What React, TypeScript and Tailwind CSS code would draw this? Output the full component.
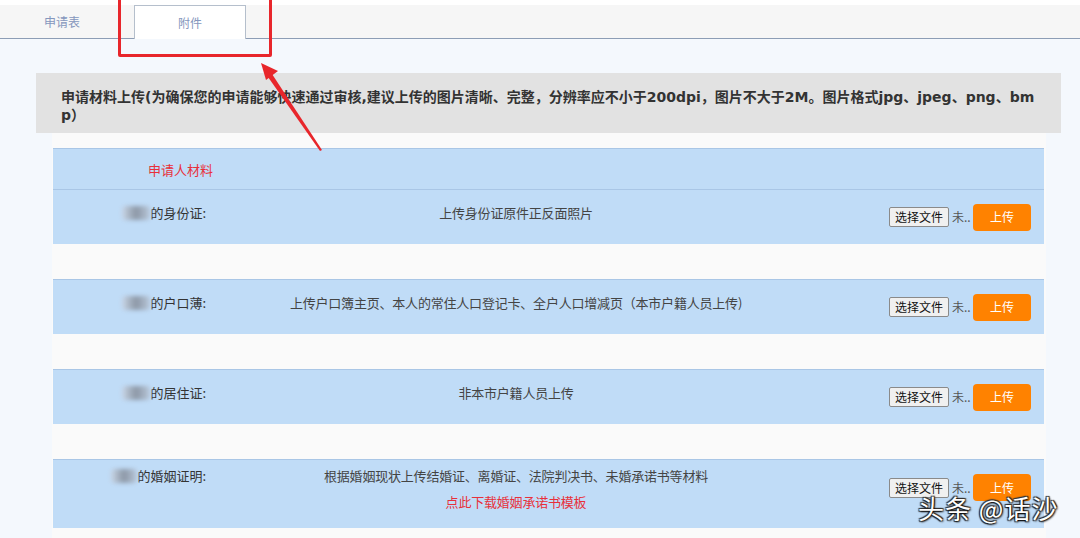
import React from 'react';

const font = { fontFamily: '"Noto Sans CJK SC", "Noto Sans", sans-serif' };
const headFont = { fontFamily: '"DejaVu Sans", "Noto Sans CJK SC", sans-serif' };

type Item = {
  label: string;
  blur: number;
  desc: string;
  link?: string;
};

const items: Item[] = [
  { label: '的身份证:', blur: 28, desc: '上传身份证原件正反面照片' },
  { label: '的户口薄:', blur: 28, desc: '上传户口簿主页、本人的常住人口登记卡、全户人口增减页（本市户籍人员上传)' },
  { label: '的居住证:', blur: 28, desc: '非本市户籍人员上传' },
  { label: '的婚姻证明:', blur: 26, desc: '根据婚姻现状上传结婚证、离婚证、法院判决书、未婚承诺书等材料', link: '点此下载婚姻承诺书模板' },
];

const Blur: React.FC<{ w: number }> = ({ w }) => (
  <span className="inline-block h-[14px] align-middle relative" style={{ width: w }}>
    <span className="absolute inset-0 bg-gradient-to-r from-[#c9d6e6] via-[#8c97a6] to-[#b9c8da] blur-[2px] rounded-sm" />
  </span>
);

const UploadRow: React.FC<{ item: Item }> = ({ item }) => (
  <div className={`flex bg-[#c0dcf7] border-t border-[#a9c6e6] ${item.link ? 'h-[69px] items-start pt-[14px]' : 'h-[55px] items-center'}`}>
    <div className="w-[153px] text-right text-[13px] text-[#333] -mt-[8px] flex justify-end items-center">
      <Blur w={item.blur} />
      <span>{item.label}</span>
    </div>
    <div className="w-[620px] flex flex-col items-center text-[13px] text-[#444] -mt-[8px] tracking-[-0.2px]">
      <span>{item.desc}</span>
      {item.link && <span className="text-[#e8303a] mt-[6px]">{item.link}</span>}
    </div>
    <div className="flex-1 flex items-center justify-end pr-[13px]">
      <span className="h-[20px] px-[5px] border border-[#8a8a8a] bg-[#f0f0f0] rounded-[2px] text-[12px] text-[#111] flex items-center">选择文件</span>
      <span className="text-[12px] text-[#555] ml-[3px] w-[21px]">未..</span>
      <span className="w-[58px] h-[27px] rounded-[4px] bg-[#ff8200] text-white text-[12px] flex items-center justify-center">上传</span>
    </div>
  </div>
);

const Gap: React.FC = () => <div className="h-[35px] bg-[#fafafa]" />;

export default function App() {
  return (
    <div className="w-[1080px] h-[538px] overflow-hidden relative bg-[#f4f8fd]" style={font}>
      {/* tab bar */}
      <div className="h-[39px] bg-[#f6f6f6] border-b border-[#8d9db5] flex items-end border-t-[5px] border-t-white">
        <div className="w-[124px] h-full flex items-center justify-center text-[12px] text-[#8597bd]">申请表</div>
        <div className="ml-[10px] w-[112px] h-[34px] bg-white border border-b-0 border-[#b5bfcc] flex items-center justify-center text-[12px] text-[#8597bd] -mb-px">附件</div>
      </div>

      {/* header */}
      <div className="ml-[36px] mr-[19px] mt-[34px] bg-[#e2e2e2] pl-[25px] pr-[26px] pt-[15px] h-[60px]">
        <p className="text-[14px] font-bold text-[#333] leading-[18px] break-all" style={headFont}>
          申请材料上传(为确保您的申请能够快速通过审核,建议上传的图片清晰、完整，分辨率应不小于200dpi，图片不大于2M。图片格式jpg、jpeg、png、bmp）
        </p>
      </div>

      {/* materials */}
      <div className="ml-[52px] mr-[34px] bg-[#fafafa] pt-[15px] pl-px pr-[2px]">
        <div className="h-[42px] bg-[#c0dcf7] border-t border-[#a9c6e6] flex items-center">
          <span className="ml-[95px] text-[13px] text-[#e8303a]">申请人材料</span>
        </div>
        <div className="-mt-px">
          <UploadRow item={items[0]} />
        </div>
        <Gap />
        <UploadRow item={items[1]} />
        <Gap />
        <UploadRow item={items[2]} />
        <Gap />
        <UploadRow item={items[3]} />
        <Gap />
      </div>

      {/* annotation overlay */}
      <div className="absolute left-[118px] top-[-4px] w-[154px] h-[61px] border-[3px] border-[#e8262b] rounded-[2px]" />
      <svg className="absolute left-0 top-0" width="1080" height="538">
        <polygon points="322,150 320,151 268,77 272,74" fill="#e8262b" />
        <polygon points="261,63 278,71 266,80" fill="#e8262b" />
      </svg>

      {/* watermark */}
      <div
        className="absolute left-[918px] top-[488px] text-[26px] text-white tracking-[1px]"
        style={{ textShadow: '1px 1px 2px #000, -1px -1px 1px #333, 1px -1px 1px #333, -1px 1px 1px #333' }}
      >
        头条 @话沙
      </div>
    </div>
  );
}
